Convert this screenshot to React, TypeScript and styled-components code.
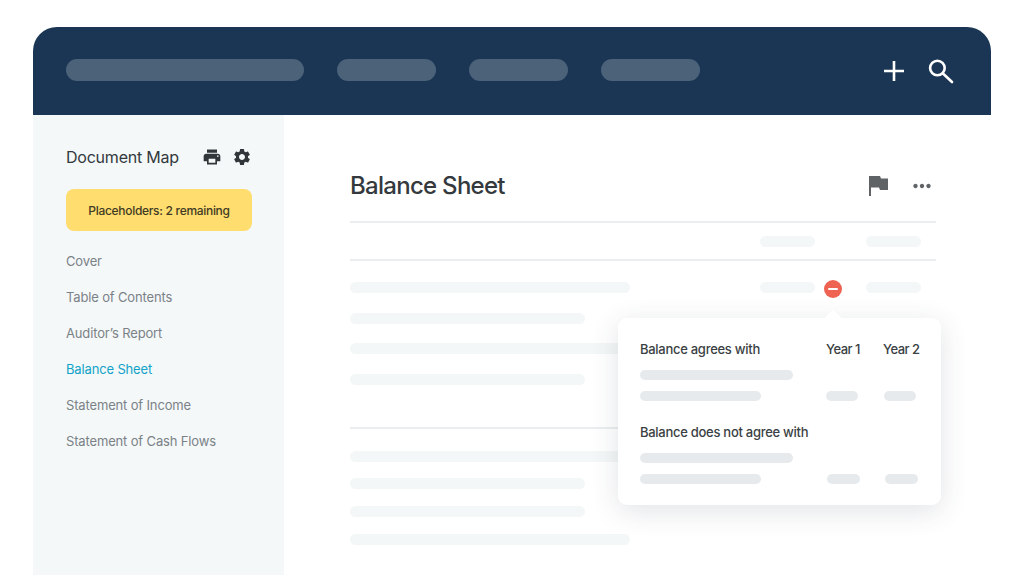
import React from "react";
import styled, { createGlobalStyle } from "styled-components";
import { MdPrint, MdSettings, MdMoreHoriz } from "react-icons/md";

const Global = createGlobalStyle`
  html, body { margin: 0; padding: 0; background: #fff; }
  body { width: 1024px; height: 575px; overflow: hidden; font-family: Inter, "Liberation Sans", sans-serif; }
`;

const Frame = styled.div`
  width: 958px;
  height: 548px;
  margin: 27px 0 0 33px;
  display: flex;
  flex-direction: column;
`;

const TopBar = styled.header`
  flex: 0 0 88px;
  background: #1b3655;
  border-radius: 24px 24px 0 0;
  display: flex;
  align-items: center;
  padding: 0 37px 0 33px;
`;

const NavPills = styled.div`
  display: flex;
  gap: 33px;
  flex: 1;
  margin-bottom: 2px;
`;

const NavPill = styled.div<{ $w: number }>`
  width: ${(p) => p.$w}px;
  height: 22px;
  border-radius: 11px;
  background: #4b6279;
`;

const TopActions = styled.div`
  display: flex;
  align-items: center;
  gap: 20px;
  color: #fff;
  svg { display: block; }
`;

const Body = styled.div`
  flex: 1;
  display: flex;
  min-height: 0;
`;

const Sidebar = styled.aside`
  flex: 0 0 251px;
  background: #f4f8f9;
  padding: 30px 32px 0 33px;
  box-sizing: border-box;
`;

const SideHead = styled.div`
  display: flex;
  align-items: center;
  height: 24px;
  width: 186px;
`;

const SideTitle = styled.div`
  flex: 1;
  font-size: 16px;
  letter-spacing: -0.22px;
  color: #33393d;
`;

const SideIcons = styled.div`
  display: flex;
  align-items: center;
  gap: 10px;
  color: #30363a;
  font-size: 20px;
  svg { display: block; }
`;

const Badge = styled.div`
  width: 186px;
  height: 42px;
  margin-top: 20px;
  border-radius: 8px;
  background: #ffdd6e;
  display: flex;
  align-items: center;
  justify-content: center;
  font-size: 12px;
  font-weight: 500;
  letter-spacing: -0.3px;
  color: #3f3b24;
`;

const NavList = styled.ul`
  list-style: none;
  margin: 12px 0 0;
  padding: 0;
`;

const NavItem = styled.li<{ $active?: boolean }>`
  height: 36px;
  line-height: 36px;
  font-size: 13px;
  letter-spacing: -0.15px;
  color: ${(p) => (p.$active ? "#12a3c8" : "#7b8287")};
`;

const Main = styled.main`
  flex: 1;
  position: relative;
  padding: 0 55px 0 66px;
  box-sizing: border-box;
  overflow: hidden;
`;

const TitleRow = styled.div`
  height: 108px;
  box-sizing: border-box;
  padding-top: 35px;
  display: flex;
  align-items: center;
  border-bottom: 2px solid #ebeeef;
`;

const Title = styled.h1`
  flex: 1;
  margin: 0;
  font-size: 24px;
  font-weight: 500;
  letter-spacing: -0.72px;
  color: #34393d;
`;

const TitleIcons = styled.div`
  display: flex;
  align-items: center;
  gap: 21px;
  margin-right: 1px;
  color: #5f6366;
  svg { display: block; }
`;

const Row = styled.div<{ $h: number; $rule?: boolean; $end?: boolean }>`
  height: ${(p) => p.$h}px;
  display: grid;
  grid-template-columns: 1fr 55px 51px 55px 15px;
  align-items: ${(p) => (p.$end ? "end" : "center")};
  box-sizing: border-box;
  ${(p) => p.$rule && "border-bottom: 2px solid #ebeeef;"}
`;

const Bar = styled.div<{ $w?: number; $col?: number }>`
  width: ${(p) => (p.$w ? `${p.$w}px` : "100%")};
  height: 11px;
  border-radius: 6px;
  background: #f4f7f7;
  grid-column: ${(p) => p.$col ?? 1};
  filter: blur(0.6px);
`;

const Marker = styled.div`
  grid-column: 3;
  grid-row: 1;
  width: 18px;
  height: 18px;
  margin: 0 0 -5px 9px;
  border-radius: 50%;
  background: #ee6352;
  display: flex;
  align-items: center;
  justify-content: center;
  &::after {
    content: "";
    width: 10px;
    height: 2px;
    border-radius: 1px;
    background: #fff;
  }
`;

const Popover = styled.section`
  position: absolute;
  left: 334px;
  top: 203px;
  width: 323px;
  height: 187px;
  box-sizing: border-box;
  padding: 22px 22px 0;
  background: #fff;
  border-radius: 9px;
  box-shadow: 0 6px 28px rgba(40, 55, 70, 0.14);
  &::before {
    content: "";
    position: absolute;
    left: 209px;
    top: -6px;
    width: 12px;
    height: 12px;
    background: #fff;
    transform: rotate(45deg);
  }
`;

const PopHead = styled.div<{ $top?: number }>`
  display: grid;
  grid-template-columns: 186px 57px 1fr;
  height: 18px;
  margin-top: ${(p) => p.$top ?? 0}px;
  line-height: 18px;
  font-size: 13px;
  font-weight: 500;
  letter-spacing: -0.28px;
  white-space: nowrap;
  color: #3a3f43;
`;

const YearLabel = styled.span`
  letter-spacing: -0.5px;
`;

const PopBar = styled.div<{ $w: number; $x?: number }>`
  width: ${(p) => p.$w}px;
  height: 10px;
  border-radius: 5px;
  background: #e7eaec;
  margin-left: ${(p) => p.$x ?? 0}px;
`;

const PopLine = styled.div<{ $top: number }>`
  display: flex;
  margin-top: ${(p) => p.$top}px;
`;

const nav = ["Cover", "Table of Contents", "Auditor’s Report", "Balance Sheet", "Statement of Income", "Statement of Cash Flows"];

export default function App() {
  return (
    <>
      <Global />
      <Frame>
        <TopBar>
          <NavPills>
            <NavPill $w={238} />
            <NavPill $w={99} />
            <NavPill $w={99} />
            <NavPill $w={99} />
          </NavPills>
          <TopActions>
            <svg width="24" height="24" viewBox="0 0 24 24" fill="none" stroke="#fff" strokeWidth="2.6">
              <path d="M12 2v20M2 12h20" />
            </svg>
            <svg width="28" height="28" viewBox="0 0 28 28" fill="none" stroke="#fff" strokeWidth="2.6" strokeLinecap="round">
              <circle cx="11.4" cy="11" r="7.3" />
              <path d="M16.7 16.2L26 25" />
            </svg>
          </TopActions>
        </TopBar>
        <Body>
          <Sidebar>
            <SideHead>
              <SideTitle>Document Map</SideTitle>
              <SideIcons>
                <MdPrint />
                <MdSettings />
              </SideIcons>
            </SideHead>
            <Badge>Placeholders: 2 remaining</Badge>
            <NavList>
              {nav.map((n) => (
                <NavItem key={n} $active={n === "Balance Sheet"}>{n}</NavItem>
              ))}
            </NavList>
          </Sidebar>
          <Main>
            <TitleRow>
              <Title>Balance Sheet</Title>
              <TitleIcons>
                <svg width="19" height="20" viewBox="0 0 19 20" fill="currentColor">
                  <path d="M0 0h11l1 2.5h7v11.5h-8l-1-2.5H2V20H0z" />
                </svg>
                <MdMoreHoriz size={26} />
              </TitleIcons>
            </TitleRow>
            <Row $h={38} $rule>
              <Bar $col={2} />
              <Bar $col={4} />
            </Row>
            <Row $h={32} $end>
              <Bar $w={280} />
              <Bar $col={2} />
              <Marker />
              <Bar $col={4} />
            </Row>
            <Row $h={31} $end><Bar $w={235} /></Row>
            <Row $h={30} $end><Bar $w={280} /></Row>
            <Row $h={31} $end><Bar $w={235} /></Row>
            <Row $h={44} $rule />
            <Row $h={33} $end><Bar $w={280} /></Row>
            <Row $h={27} $end><Bar $w={235} /></Row>
            <Row $h={28} $end><Bar $w={235} /></Row>
            <Row $h={28} $end><Bar $w={280} /></Row>
            <Popover>
              <PopHead>
                <span>Balance agrees with</span>
                <YearLabel>Year 1</YearLabel>
                <YearLabel>Year 2</YearLabel>
              </PopHead>
              <PopLine $top={12}><PopBar $w={153} /></PopLine>
              <PopLine $top={11}>
                <PopBar $w={121} />
                <PopBar $w={32} $x={65} />
                <PopBar $w={32} $x={26} />
              </PopLine>
              <PopHead $top={22}>
                <span>Balance does not agree with</span>
              </PopHead>
              <PopLine $top={12}><PopBar $w={153} /></PopLine>
              <PopLine $top={11}>
                <PopBar $w={121} />
                <PopBar $w={33} $x={66} />
                <PopBar $w={33} $x={25} />
              </PopLine>
            </Popover>
          </Main>
        </Body>
      </Frame>
    </>
  );
}
